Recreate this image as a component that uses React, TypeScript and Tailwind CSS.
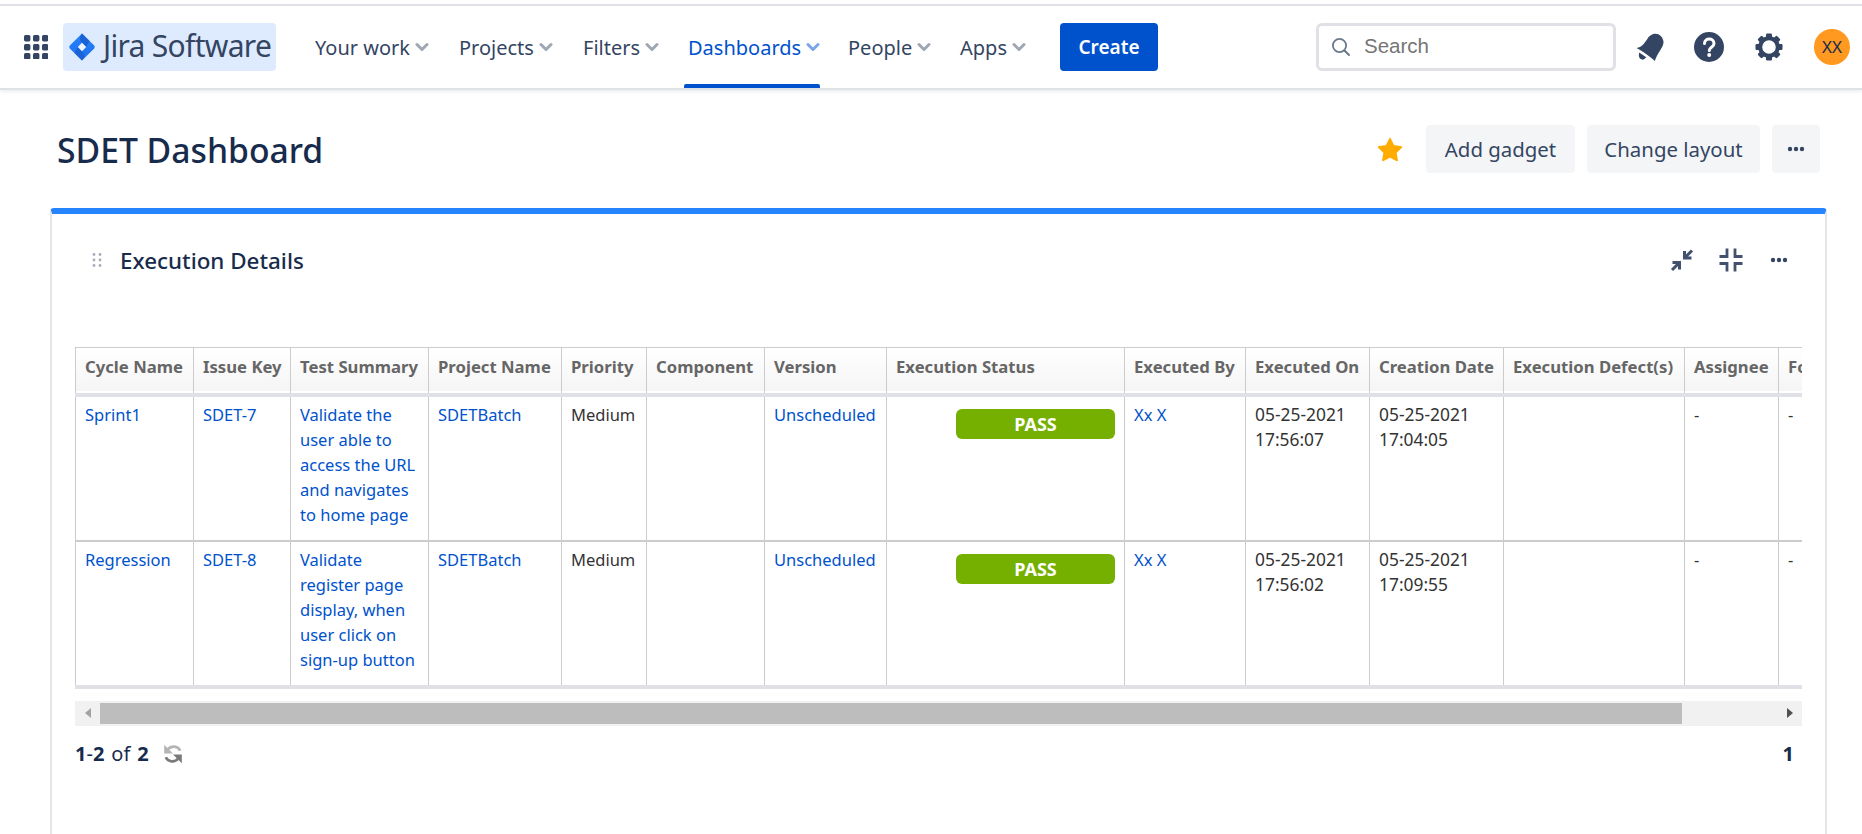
import React from "react";

const F = "font-['Noto_Sans','Open_Sans',sans-serif]";

function Chevron({ active }: { active?: boolean }) {
  return (
    <svg width="14" height="10" viewBox="0 0 14 10" className="ml-[5px] shrink-0 mt-[-1px]">
      <path d="M2 2.5 L7 7.5 L12 2.5" fill="none" stroke={active ? "#7aa5ec" : "#9fa6b4"} strokeWidth="3" strokeLinecap="round" strokeLinejoin="round" />
    </svg>
  );
}

function NavItem({ label, w, active }: { label: string; w: string; active?: boolean }) {
  return (
    <div className={`relative flex h-full items-center pl-1 ${w} ${active ? "text-[#0052cc]" : "text-[#344563]"}`}>
      <span className="mt-[2px] text-[20px] whitespace-nowrap">{label}</span>
      <Chevron active={active} />
      {active && <div className="absolute left-0 bottom-0 h-1 w-[136px] rounded-t-[2px] bg-[#0052cc]" />}
    </div>
  );
}

function Dots({ className }: { className?: string }) {
  return (
    <svg width="18" height="6" viewBox="0 0 18 6" className={className}>
      <circle cx="3" cy="3" r="2.2" fill="#344563" />
      <circle cx="9" cy="3" r="2.2" fill="#344563" />
      <circle cx="15" cy="3" r="2.2" fill="#344563" />
    </svg>
  );
}

function GridIcon() {
  const pts = [0, 1, 2];
  return (
    <svg width="24" height="24" viewBox="0 0 24 24">
      {pts.map((y) => pts.map((x) => <rect key={`${x}${y}`} x={x * 9} y={y * 9} width="6.4" height="6.4" rx="1.6" fill="#344563" />))}
    </svg>
  );
}

function Logo() {
  return (
    <svg width="26" height="28" viewBox="0 0 26 28">
      <defs>
        <linearGradient id="jg" x1="0" y1="0" x2="0" y2="1">
          <stop offset="0" stopColor="#2684ff" />
          <stop offset="1" stopColor="#1f6fe8" />
        </linearGradient>
      </defs>
      <path d="M13 .5 L25.2 12.6 Q26.2 14 25.2 15.4 L13 27.5 L.8 15.4 Q-.2 14 .8 12.6 Z" fill="url(#jg)" />
      <path d="M13 .5 Q8.5 5.5 13 9.8 L17.2 14 L20.5 8 Z" fill="#1a63d6" />
      <path d="M13 27.5 Q17.5 22.5 13 18.2 L8.8 14 L5.5 20 Z" fill="#1a63d6" />
      <path d="M13 9.8 L17.2 14 L13 18.2 L8.8 14 Z" fill="#eef5ff" />
    </svg>
  );
}

type Row = {
  cycle: string; key: string; summary: string[]; on: string[]; created: string[];
};
const rows: Row[] = [
  { cycle: "Sprint1", key: "SDET-7", summary: ["Validate the", "user able to", "access the URL", "and navigates", "to home page"], on: ["05-25-2021", "17:56:07"], created: ["05-25-2021", "17:04:05"] },
  { cycle: "Regression", key: "SDET-8", summary: ["Validate", "register page", "display, when", "user click on", "sign-up button"], on: ["05-25-2021", "17:56:02"], created: ["05-25-2021", "17:09:55"] },
];

const headers: [string, string][] = [
  ["Cycle Name", "w-[118px]"], ["Issue Key", "w-[97px]"], ["Test Summary", "w-[138px]"], ["Project Name", "w-[133px]"],
  ["Priority", "w-[85px]"], ["Component", "w-[118px]"], ["Version", "w-[122px]"], ["Execution Status", "w-[238px]"],
  ["Executed By", "w-[121px]"], ["Executed On", "w-[124px]"], ["Creation Date", "w-[134px]"], ["Execution Defect(s)", "w-[181px]"],
  ["Assignee", "w-[94px]"], ["Folder Name", "w-[120px]"],
];

const tdBase = "border-x border-[#cccccc] align-top px-[9px] pt-[5px] pb-0 text-[16.5px] leading-[25px]";
const td = `${tdBase} text-[#333333]`;
const tdLink = `${tdBase} text-[#0052cc]`;
const tdDate = "border-x border-[#cccccc] align-top px-[9px] pt-[5px] pb-0 text-[17.4px] leading-[25px] text-[#333333] whitespace-nowrap";

export default function App() {
  return (
    <div className={`flex h-[834px] flex-col overflow-hidden bg-white ${F}`}>
      <div className="h-1 shrink-0 bg-white" />
      <header className="flex h-[86px] shrink-0 items-center border-t-2 border-b-2 border-[#dfe1e6] pl-6 pr-3 shadow-[0_2px_3px_rgba(9,30,66,0.07)]">
        <GridIcon />
        <div className="ml-[15px] flex h-12 w-[213px] items-center rounded-[4px] bg-[#deebff] pl-[6px]">
          <Logo />
          <span className="ml-[8px] mb-[2px] text-[30px] leading-none tracking-[-0.7px] text-[#344563]">Jira Software</span>
        </div>
        <nav className="ml-[35px] flex h-full items-center">
          <NavItem label="Your work" w="w-[144px]" />
          <NavItem label="Projects" w="w-[124px]" />
          <NavItem label="Filters" w="w-[105px]" />
          <NavItem label="Dashboards" w="w-[160px]" active />
          <NavItem label="People" w="w-[112px]" />
          <NavItem label="Apps" w="w-[104px]" />
        </nav>
        <button className="h-12 w-[98px] rounded-[4px] bg-[#0052cc] text-[19px] font-semibold text-white">Create</button>
        <div className="ml-[158px] flex h-12 w-[300px] items-center rounded-[6px] border-[3px] border-[#dfe1e6] bg-white pl-3">
          <svg width="20" height="20" viewBox="0 0 20 20">
            <circle cx="8.5" cy="8.5" r="6.6" fill="none" stroke="#6b778c" strokeWidth="1.8" />
            <path d="M13.5 13.5 L18 18" stroke="#6b778c" strokeWidth="2" strokeLinecap="round" />
          </svg>
          <span className="ml-[13px] mb-[2px] font-['Liberation_Sans',sans-serif] text-[20.5px] text-[#757575]">Search</span>
        </div>
        <svg width="28" height="28" viewBox="0 0 26 26" className="ml-[20px]">
          <path d="M16 1 C20 -0.5 25 2.5 25.5 8 C26 13 20 18 17.5 26 C13 22 6 17 0.5 14 C6 13 8 9 10.5 5.5 C12 3 14 2 16 1 Z" fill="#344563" />
          <path d="M3 18 L9.5 22.5 Q7 26 4 24 Q2 22 3 18 Z" fill="#344563" />
        </svg>
        <svg width="30" height="30" viewBox="0 0 30 30" className="ml-[30px]">
          <circle cx="15" cy="15" r="15" fill="#344563" />
          <path d="M10.5 11.5 C10.5 5.5 20 5.5 20 11.5 C20 15.5 15.3 15 15.3 18.5" fill="none" stroke="white" strokeWidth="3" strokeLinecap="round" />
          <circle cx="15.2" cy="23" r="2" fill="white" />
        </svg>
        <svg width="28" height="28" viewBox="0 0 28 28" className="ml-[31px]">
          <circle cx="14" cy="14" r="8.8" fill="none" stroke="#344563" strokeWidth="4" />
          {[0, 45, 90, 135, 180, 225, 270, 315].map((a) => (
            <rect key={a} x="11" y="0.5" width="6" height="6" rx="1.2" fill="#344563" transform={`rotate(${a} 14 14)`} />
          ))}
        </svg>
        <div className="ml-[31px] flex h-9 w-9 items-center justify-center rounded-full bg-[#ff991f] text-[17px] text-[#172b4d]">XX</div>
      </header>

      <div className="flex h-[118px] shrink-0 items-center pl-[57px] pr-[42px]">
        <h1 className="mt-[4px] text-[33.7px] font-medium leading-none text-[#172b4d]">SDET Dashboard</h1>
        <svg width="26" height="25" viewBox="0 0 26 25" className="ml-auto">
          <path d="M13 1.5 L16.6 8.8 L24.6 10 L18.8 15.6 L20.2 23.5 L13 19.8 L5.8 23.5 L7.2 15.6 L1.4 10 L9.4 8.8 Z" fill="#ffab00" stroke="#ffab00" strokeWidth="1.5" strokeLinejoin="round" />
        </svg>
        <button className="ml-[23px] h-12 w-[149px] rounded-[4px] bg-[#f4f5f7] text-[20.4px] text-[#344563]">Add gadget</button>
        <button className="ml-3 h-12 w-[173px] rounded-[4px] bg-[#f4f5f7] text-[20.4px] text-[#344563]">Change layout</button>
        <button className="ml-3 flex h-12 w-12 items-center justify-center rounded-[4px] bg-[#f4f5f7]"><Dots /></button>
      </div>

      <section className="ml-[50px] mr-[35px] min-h-0 flex-1 rounded-t-[4px] border-x-2 border-[#e4e5e9] border-t-[6px] border-t-[#2684ff] pl-[23px] pr-[23px]">
        <div className="flex h-[88px] items-center pt-[7px] pb-[4px]">
          <svg width="10" height="16" viewBox="0 0 10 16" className="ml-[17px]">
            {[1.5, 7, 12.5].map((y) => (
              <g key={y}>
                <circle cx="2" cy={y + 1} r="1.4" fill="#a5adba" />
                <circle cx="8" cy={y + 1} r="1.4" fill="#a5adba" />
              </g>
            ))}
          </svg>
          <h2 className="ml-[18px] mt-[2px] text-[22.4px] font-medium text-[#172b4d]">Execution Details</h2>
          <svg width="24" height="24" viewBox="0 0 24 24" className="ml-auto">
            <path d="M15 9.5 L22 2.5 M14.5 3 V10 H21.5" fill="none" stroke="#42526e" strokeWidth="3" />
            <path d="M9 15 L2 22 M2.5 14.5 H9.5 V21.5" fill="none" stroke="#42526e" strokeWidth="3" />
          </svg>
          <svg width="24" height="24" viewBox="0 0 24 24" className="ml-[25px]">
            <path d="M0.5 8.5 H8 V0.5 M23.5 8.5 H16 V0.5 M0.5 15.5 H8 V23.5 M23.5 15.5 H16 V23.5" fill="none" stroke="#42526e" strokeWidth="2.8" />
          </svg>
          <Dots className="ml-[27px] mr-[14px]" />
        </div>

        <div className="mt-[45px] overflow-hidden">
          <table className="w-[1815px] table-fixed border-collapse border-t border-l border-[#cccccc]">
            <thead>
              <tr className="h-[47px] border-b-[4px] border-[#dfe1e6] bg-gradient-to-b from-white to-[#f5f5f5]">
                {headers.map(([h, w]) => (
                  <th key={h} className={`${w} border-x border-[#cccccc] px-[9px] pb-[7px] text-left text-[16.7px] font-bold whitespace-nowrap text-[#666666]`}>{h}</th>
                ))}
              </tr>
            </thead>
            <tbody>
              {rows.map((r, i) => (
                <tr key={r.key} className={`h-[146px] ${i === 1 ? "border-b-[4px] border-[#dfe1e6]" : "border-b-2 border-[#cccccc]"}`}>
                  <td className={tdLink}>{r.cycle}</td>
                  <td className={tdLink}>{r.key}</td>
                  <td className={`${tdLink} whitespace-nowrap`}>{r.summary.map((s) => <div key={s}>{s}</div>)}</td>
                  <td className={tdLink}>SDETBatch</td>
                  <td className={td}>Medium</td>
                  <td className={td}></td>
                  <td className={tdLink}>Unscheduled</td>
                  <td className={td}>
                    <div className="mt-[7px] ml-[60px] flex h-[30px] w-[159px] items-center justify-center rounded-[6px] bg-[#75b000] text-[18px] font-bold leading-none text-white">PASS</div>
                  </td>
                  <td className={tdLink}>Xx X</td>
                  <td className={tdDate}>{r.on.map((s) => <div key={s}>{s}</div>)}</td>
                  <td className={tdDate}>{r.created.map((s) => <div key={s}>{s}</div>)}</td>
                  <td className={td}></td>
                  <td className={td}>-</td>
                  <td className={td}>-</td>
                </tr>
              ))}
            </tbody>
          </table>
        </div>

        <div className="mt-[12px] flex h-[25px] items-center bg-[#f1f1f1]">
          <div className="flex h-full w-[25px] shrink-0 items-center justify-center">
            <div className="h-0 w-0 border-y-[5px] border-r-[6px] border-y-transparent border-r-[#a3a3a3]" />
          </div>
          <div className="h-[21px] w-[1582px] bg-[#bdbdbd]" />
          <div className="ml-auto flex h-full w-[25px] items-center justify-center">
            <div className="h-0 w-0 border-y-[5px] border-l-[6px] border-y-transparent border-l-[#505050]" />
          </div>
        </div>

        <div className="mt-[16px] flex items-center text-[20px] leading-6 text-[#172b4d]">
          <span className="font-bold">1</span><span>-</span><span className="font-bold">2</span><span className="ml-[7px]">of</span><span className="ml-[7px] font-bold">2</span>
          <svg width="22" height="22" viewBox="0 0 20 20" className="ml-[13px]">
            <path d="M16.5 7 C14.5 2.5 8.5 2 5 6" fill="none" stroke="#b5b5b5" strokeWidth="2.4" />
            <path d="M2 1.5 V9.5 H10 Z" fill="#b5b5b5" />
            <path d="M3.5 13 C5.5 17.5 11.5 18 15 14" fill="none" stroke="#7a7a7a" strokeWidth="2.4" />
            <path d="M18 18.5 V10.5 H10 Z" fill="#7a7a7a" />
          </svg>
          <span className="ml-auto mr-[8px] font-bold">1</span>
        </div>
      </section>
    </div>
  );
}
